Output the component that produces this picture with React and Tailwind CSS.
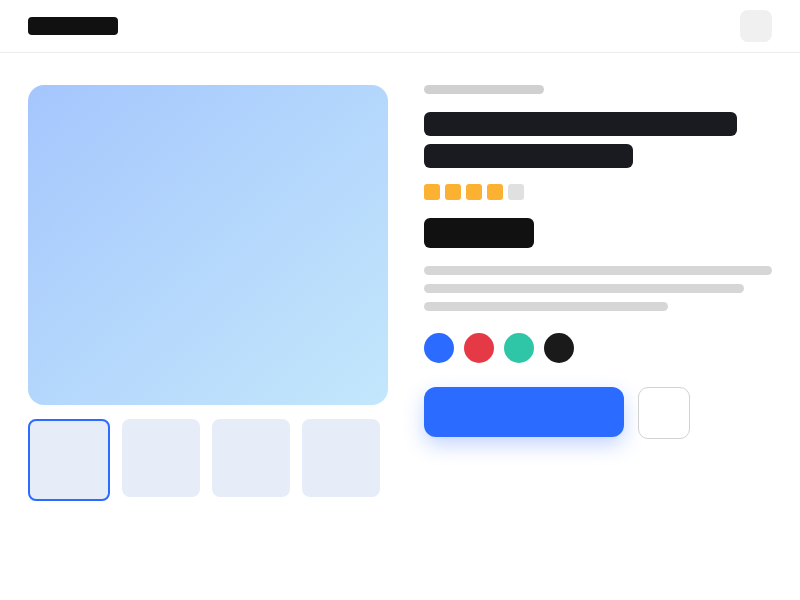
import React from "react";

const thumbs = [0, 1, 2, 3];
const swatches = ["bg-[#2b6bff]", "bg-[#e63946]", "bg-[#2ec6a6]", "bg-[#1a1a1a]"];

function Stars({ value = 4 }) {
    return (
        <div className="flex gap-[5px]">
            {[0, 1, 2, 3, 4].map((i) => (
                <div
                    key={i}
                    className={[
                        "w-4 h-4 rounded-[3px]",
                        i < value ? "bg-[#fbb131]" : "bg-[#e0e0e0]",
                    ].join(" ")}
                />
            ))}
        </div>
    );
}

export default function App() {
    return (
        <div className="w-[800px] h-[600px] bg-white font-['Inter',sans-serif]">
            <header className="h-[53px] px-7 flex items-center justify-between border-b border-[#ececec]">
                <div className="w-[90px] h-[18px] rounded bg-[#111111] -mt-[1px]" />
                <div className="w-8 h-8 rounded-lg bg-[#f0f0f0] -mt-[1px]" />
            </header>

            <main className="px-7 pt-8 flex gap-9">
                <section className="w-[360px] flex flex-col gap-[14px]">
                    <div className="w-[360px] h-[320px] rounded-2xl bg-linear-to-br from-[#a5c6fd] to-[#c3e7fb]" />
                    <div className="flex items-start gap-3">
                        {thumbs.map((i) => (
                            <div
                                key={i}
                                className={
                                    i === 0
                                        ? "w-[82px] h-[82px] rounded-lg border-2 border-[#2b6bff] bg-[#e6edf8]"
                                        : "w-[78px] h-[78px] rounded-lg bg-[#e6edf8]"
                                }
                            />
                        ))}
                    </div>
                </section>

                <section className="w-[348px] flex flex-col">
                    <div className="w-[120px] h-[9px] rounded-full bg-[#d0d0d0]" />
                    <div className="mt-[18px] flex flex-col gap-2">
                        <div className="w-[313px] h-6 rounded-md bg-[#1a1b20]" />
                        <div className="w-[209px] h-6 rounded-md bg-[#1a1b20]" />
                    </div>
                    <div className="mt-4">
                        <Stars value={4} />
                    </div>
                    <div className="mt-[18px] w-[110px] h-[30px] rounded-md bg-[#111111]" />
                    <div className="mt-[18px] flex flex-col gap-[9px]">
                        <div className="w-full h-[9px] rounded-full bg-[#d6d6d6]" />
                        <div className="w-[320px] h-[9px] rounded-full bg-[#d6d6d6]" />
                        <div className="w-[244px] h-[9px] rounded-full bg-[#d6d6d6]" />
                    </div>
                    <div className="mt-[22px] flex gap-[10px]">
                        {swatches.map((c) => (
                            <div key={c} className={"w-[30px] h-[30px] rounded-full " + c} />
                        ))}
                    </div>
                    <div className="mt-6 flex items-start gap-[14px]">
                        <button className="w-[200px] h-[50px] rounded-xl bg-[#2b6bff] shadow-[0_8px_20px_rgba(43,107,255,0.28)]" />
                        <button className="w-[52px] h-[52px] rounded-[10px] border border-[#d2d2d2] bg-white" />
                    </div>
                </section>
            </main>
        </div>
    );
}
